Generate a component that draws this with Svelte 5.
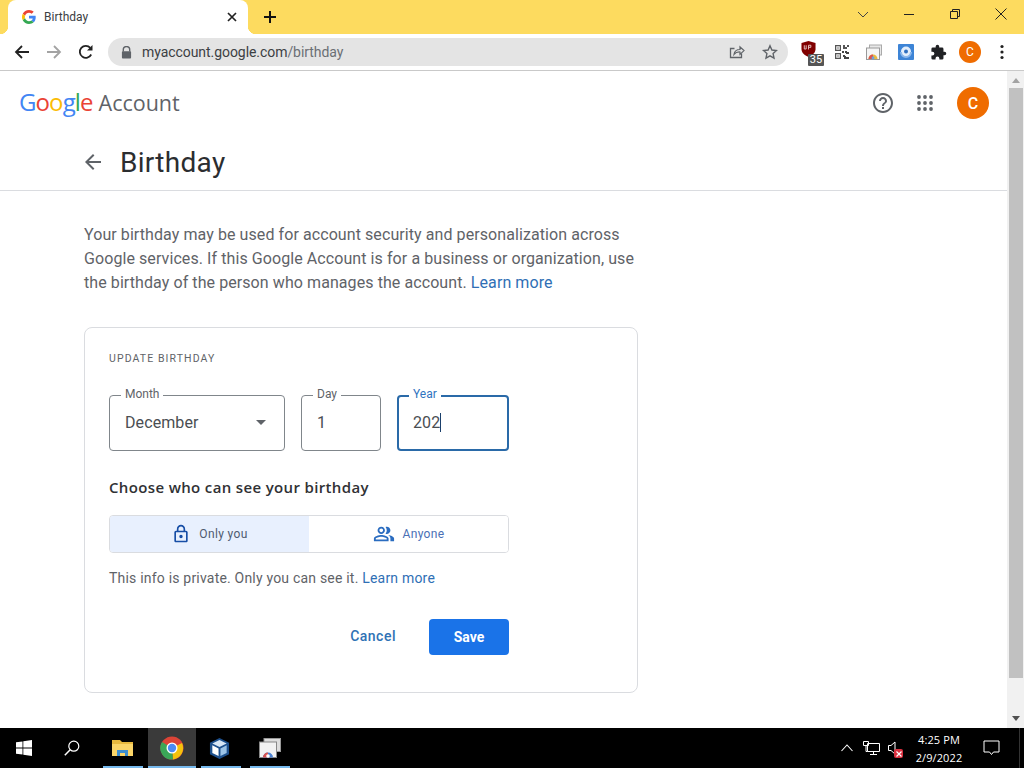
<script>
  const day = "1";
  const year = "202";
  let audience = "me";
</script>

<div class="screen">
  <div class="tabstrip">
    <div class="tab">
      <svg class="favicon" viewBox="0 0 48 48" width="14" height="14">
        <path fill="#EA4335" d="M24 9.500c3.500 0 6.700 1.200 9.200 3.600l6.900-6.900C35.900 2.400 30.500 0 24 0 14.600 0 6.500 5.400 2.600 13.200l8 6.200C12.500 13.600 17.800 9.500 24 9.500z"/>
        <path fill="#4285F4" d="M47 24.500c0-1.600-.2-3.100-.4-4.500H24v9h12.900c-.6 3-2.200 5.500-4.700 7.200l7.700 6C44.400 38 47 31.800 47 24.500z"/>
        <path fill="#FBBC05" d="M10.500 28.600c-.5-1.500-.8-3-.8-4.600s.3-3.100.8-4.600l-8-6.200C.9 16.500 0 20.100 0 24s.9 7.500 2.600 10.800l7.900-6.200z"/>
        <path fill="#34A853" d="M24 48c6.500 0 11.900-2.100 15.900-5.800l-7.700-6c-2.200 1.400-4.900 2.300-8.200 2.300-6.200 0-11.500-4.200-13.400-9.800l-8 6.200C6.500 42.600 14.600 48 24 48z"/>
      </svg>
      <span class="tab-title">Birthday</span>
      <svg class="tab-close" viewBox="0 0 12 12" width="12" height="12"><path d="M2 2l8 8M10 2l-8 8" stroke="#222" stroke-width="1.700" fill="none"/></svg>
    </div>
    <div class="new-tab">
      <svg viewBox="0 0 14 14" width="14" height="14"><path d="M7 1v12M1 7h12" stroke="#111" stroke-width="2" fill="none"/></svg>
    </div>
    <div class="spacer"></div>
    <div class="winbtn"><svg viewBox="0 0 12 12" width="12" height="12"><path d="M1 4l5 5 5-5" stroke="#444" fill="none"/></svg></div>
    <div class="winbtn"><svg viewBox="0 0 12 12" width="12" height="12"><path d="M1 6.500h10" stroke="#222" fill="none"/></svg></div>
    <div class="winbtn"><svg viewBox="0 0 12 12" width="12" height="12"><path d="M1.500 3.500h7v7h-7zM3.500 3.500v-2h7v7h-2" stroke="#222" fill="none"/></svg></div>
    <div class="winbtn"><svg viewBox="0 0 12 12" width="12" height="12"><path d="M.5.500l11 11M11.500.500l-11 11" stroke="#222" fill="none"/></svg></div>
  </div>

  <div class="toolbar">
    <div class="tool"><svg viewBox="0 0 16 16" width="16" height="16"><path d="M15 8H2M8 2L2 8l6 6" stroke="#222" stroke-width="1.800" fill="none"/></svg></div>
    <div class="tool"><svg viewBox="0 0 16 16" width="16" height="16"><path d="M1 8h13M8 2l6 6-6 6" stroke="#a3a3a3" stroke-width="1.800" fill="none"/></svg></div>
    <div class="tool"><svg viewBox="0 0 16 16" width="16" height="16"><path d="M13.200 10.500A6 6 0 1 1 12.300 3.800" stroke="#222" stroke-width="1.800" fill="none"/><path d="M14.500 1v5.500H9z" fill="#222"/></svg></div>
    <div class="omnibox">
      <svg class="lock" viewBox="0 0 12 14" width="11" height="13"><path d="M2.500 6V4a3.500 3.500 0 0 1 7 0v2" stroke="#5f6368" stroke-width="1.500" fill="none"/><rect x="1" y="5.500" width="10" height="8" rx="1" fill="#5f6368"/></svg>
      <span class="url">myaccount.google.com<span class="url-path">/birthday</span></span>
      <span class="spacer"></span>
      <svg class="omni-icon" viewBox="0 0 16 16" width="16" height="16"><path d="M12.500 9.500v4h-11v-9h4" stroke="#5f6368" stroke-width="1.300" fill="none"/><path d="M5 10.500c.4-3 2.600-5 6-5V2.800l4 3.800-4 3.800V8c-2.600-.2-4.600.7-6 2.500z" stroke="#5f6368" stroke-width="1.200" fill="none"/></svg>
      <svg class="omni-icon star" viewBox="0 0 16 16" width="16" height="16"><path d="M8 1.800l1.900 4.200 4.600.5-3.400 3.100.9 4.500L8 11.800l-4 2.300.9-4.500-3.400-3.100 4.600-.5z" stroke="#5f6368" stroke-width="1.400" fill="none"/></svg>
    </div>
    <div class="extensions">
      <div class="tool ublock">
        <svg class="shield" viewBox="0 0 16 17" width="15" height="16"><path d="M8 0l7.500 2.200v6.300c0 4-3.200 6.700-7.500 8.500-4.300-1.800-7.500-4.500-7.500-8.500V2.200z" fill="#800000"/><path d="M3.500 4.500v4h2v-4M8 9V4.500h2.500v2.200H8" stroke="#e8c8c8" stroke-width="1" fill="none"/></svg>
        <span class="badge">35</span>
      </div>
      <div class="tool">
        <svg viewBox="0 0 14 14" width="14" height="14">
          <path fill="#555" d="M0 0h6v6H0zM8 0h2v2h2v2H8zM12 0h2v2h-2zM0 8h6v6H0z"/>
          <path fill="#eee" d="M1.200 1.200h3.600v3.600H1.200zM1.200 9.200h3.600v3.600H1.200z"/>
          <path fill="#444" d="M2.400 2.400h1.200v1.200H2.400zM2.400 10.400h1.200v1.200H2.400zM7 6h2v2H7zM10 6h2v1h2v2h-3v-1h-1zM8 10h2v1h1v1h3v2H9v-2H8z"/>
        </svg>
      </div>
      <div class="tool">
        <svg viewBox="0 0 16 16" width="16" height="16">
          <rect x="3.500" y="1" width="12" height="10" fill="#e8e8e8" stroke="#aaa"/>
          <rect x="0.500" y="4" width="13" height="11.500" fill="#f5f5f5" stroke="#999"/>
          <path d="M2.500 15a4.500 4.500 0 0 1 9 0z" fill="#e8b93e"/>
          <path d="M2.500 15a4.500 4.500 0 0 1 4.500-4.500V15z" fill="#d9534f"/>
          <circle cx="7" cy="14" r="1.400" fill="#6a9fe0"/>
        </svg>
      </div>
      <div class="tool">
        <svg viewBox="0 0 16 16" width="16" height="16"><rect width="16" height="16" rx="1" fill="#3d84d6"/><circle cx="8" cy="7.500" r="5" fill="#e3eefb"/><circle cx="8" cy="7.500" r="2" fill="#2f6fc0"/><path d="M2 8a6 6 0 0 0 12 0l-2 0a4 4 0 0 1-8 0z" fill="#8cb8ec"/></svg>
      </div>
      <div class="tool">
        <svg viewBox="0 0 24 24" width="17" height="17"><path fill="#202124" d="M20.500 11H19V7a2 2 0 0 0-2-2h-4V3.500a2.500 2.500 0 0 0-5 0V5H4a2 2 0 0 0-2 2v3.800h1.500a2.700 2.700 0 0 1 0 5.400H2V20a2 2 0 0 0 2 2h3.800v-1.500a2.700 2.700 0 0 1 5.400 0V22H17a2 2 0 0 0 2-2v-4h1.500a2.500 2.500 0 0 0 0-5z"/></svg>
      </div>
      <div class="tool"><span class="avatar small">C</span></div>
      <div class="tool">
        <svg viewBox="0 0 4 16" width="4" height="16"><circle cx="2" cy="2.500" r="1.600" fill="#222"/><circle cx="2" cy="8" r="1.600" fill="#222"/><circle cx="2" cy="13.500" r="1.600" fill="#222"/></svg>
      </div>
    </div>
  </div>

  <div class="viewport">
    <div class="page">
      <header class="topbar">
        <div class="logo">
          <span class="google"><span class="b">G</span><span class="r">o</span><span class="y">o</span><span class="b">g</span><span class="g">l</span><span class="r">e</span></span>
          <span class="account">Account</span>
        </div>
        <div class="spacer"></div>
        <svg class="help" viewBox="0 0 24 24" width="24" height="24"><path fill="#5f6368" d="M11 18h2v-2h-2v2zm1-16C6.480 2 2 6.480 2 12s4.480 10 10 10 10-4.480 10-10S17.520 2 12 2zm0 18c-4.410 0-8-3.590-8-8s3.590-8 8-8 8 3.590 8 8-3.590 8-8 8zm0-14c-2.210 0-4 1.790-4 4h2c0-1.100.9-2 2-2s2 .9 2 2c0 2-3 1.750-3 5h2c0-2.250 3-2.500 3-5 0-2.210-1.790-4-4-4z"/></svg>
        <svg class="apps" viewBox="0 0 16 16" width="16" height="16">
          {#each [2, 8, 14] as cy}
            {#each [2, 8, 14] as cx}
              <circle {cx} {cy} r="1.900" fill="#5f6368"/>
            {/each}
          {/each}
        </svg>
        <span class="avatar large">C</span>
      </header>

      <div class="title-row">
        <svg viewBox="0 0 24 24" width="24" height="24"><path fill="#5f6368" d="M20 11H7.830l5.590-5.590L12 4l-8 8 8 8 1.410-1.410L7.830 13H20v-2z"/></svg>
        <h1>Birthday</h1>
      </div>

      <main class="content">
        <p class="intro">Your birthday may be used for account security and personalization across Google services. If this Google Account is for a business or organization, use the birthday of the person who manages the account. <span class="link">Learn more</span></p>

        <section class="card">
          <h2>UPDATE BIRTHDAY</h2>
          <div class="fields">
            <div class="field month">
              <span class="legend">Month</span>
              <span class="value">December</span>
              <span class="caret"></span>
            </div>
            <div class="field day">
              <span class="legend">Day</span>
              <span class="value">{day}</span>
            </div>
            <div class="field year">
              <span class="legend">Year</span>
              <span class="value">{year}</span><span class="cursor"></span>
            </div>
          </div>

          <h3>Choose who can see your birthday</h3>

          <div class="toggle">
            <button class:on={audience === "me"} onclick={() => (audience = "me")}>
              <svg viewBox="0 0 24 24" width="20" height="20"><path fill="#174ea6" d="M18 8h-1V6c0-2.760-2.240-5-5-5S7 3.240 7 6v2H6c-1.100 0-2 .9-2 2v10c0 1.100.9 2 2 2h12c1.100 0 2-.9 2-2V10c0-1.100-.9-2-2-2zM9 6c0-1.660 1.340-3 3-3s3 1.340 3 3v2H9V6zm9 14H6V10h12v10zm-6-3c1.100 0 2-.9 2-2s-.9-2-2-2-2 .9-2 2 .9 2 2 2z"/></svg>
              <span>Only you</span>
            </button>
            <button class:on={audience === "all"} onclick={() => (audience = "all")}>
              <svg viewBox="0 0 24 24" width="22" height="22"><path fill="#2a6cc0" d="M16.670 13.130C18.040 14.060 19 15.320 19 17v3h4v-3c0-2.180-3.570-3.470-6.330-3.870zM15 12c2.210 0 4-1.790 4-4s-1.790-4-4-4c-.47 0-.91.100-1.330.24C14.500 5.270 15 6.580 15 8s-.5 2.730-1.330 3.760c.42.140.86.240 1.330.240zM9 12c2.210 0 4-1.790 4-4s-1.790-4-4-4-4 1.790-4 4 1.790 4 4 4zm0-6c1.100 0 2 .9 2 2s-.9 2-2 2-2-.9-2-2 .9-2 2-2zm0 7c-2.670 0-8 1.340-8 4v3h16v-3c0-2.660-5.330-4-8-4zm6 5H3v-.99C3.200 16.290 6.300 15 9 15s5.800 1.290 6 2v1z"/></svg>
              <span>Anyone</span>
            </button>
          </div>

          <p class="note">This info is private. Only you can see it. <span class="link">Learn more</span></p>

          <div class="actions">
            <span class="cancel">Cancel</span>
            <span class="save">Save</span>
          </div>
        </section>
      </main>
    </div>

    <div class="scrollbar">
      <span class="arrow up"></span>
      <div class="thumb"></div>
      <span class="arrow down"></span>
    </div>
  </div>

  <footer class="taskbar">
    <div class="task start">
      <svg viewBox="0 0 16 16" width="16" height="16"><path fill="#fff" d="M0 2.300l6.500-.9v6.200H0zM7.300 1.300L16 0v7.600H7.300zM0 8.400h6.500v6.200L0 13.700zM7.300 8.400H16V16l-8.700-1.200z"/></svg>
    </div>
    <div class="task search">
      <svg viewBox="0 0 16 16" width="16" height="16"><circle cx="9.800" cy="6.200" r="5" stroke="#fff" stroke-width="1.200" fill="none"/><path d="M6.200 9.800L.8 15.200" stroke="#fff" stroke-width="1.500"/></svg>
    </div>
    <div class="task app explorer">
      <svg viewBox="0 0 22 18" width="22" height="18"><path d="M0 1h8l2 2h11v14H0z" fill="#e8b93e"/><path d="M0 5h21v12H0z" fill="#fbd568"/><path d="M5 17v-6h11v6h-3v-3H8v3z" fill="#3d8ed0"/></svg>
    </div>
    <div class="task app active">
      <svg viewBox="0 0 24 24" width="24" height="24">
        <circle cx="12" cy="12" r="11.500" fill="#db4437"/>
        <path d="M12 12L22 7a11.500 11.500 0 0 1-9 16.500z" fill="#f4c20d"/>
        <path d="M12 12L13 23.500A11.500 11.500 0 0 1 2 6z" fill="#3aa757"/>
        <circle cx="12" cy="12" r="5.500" fill="#fff"/>
        <circle cx="12" cy="12" r="4.200" fill="#4b8bf5"/>
      </svg>
    </div>
    <div class="task app vbox">
      <svg viewBox="0 0 22 24" width="21" height="23"><path d="M11 1l10 5v12l-10 5L1 18V6z" fill="#1c4f8c"/><path d="M11 3l7.500 3.700L11 10.500 3.500 6.700z" fill="#d7e6f5"/><path d="M3.500 8.500l6.500 3.400v8l-6.500-3.300z" fill="#fff"/><path d="M12 11.900l6.500-3.400v8.100L12 19.900z" fill="#9cc3e6"/></svg>
    </div>
    <div class="task app">
      <svg viewBox="0 0 22 20" width="22" height="20"><rect x="5" y="0.500" width="16.500" height="13" fill="#ddd" stroke="#999"/><rect x="0.500" y="4" width="17" height="15.500" fill="#f2f2f2" stroke="#888"/><path d="M4 19.500a5 5 0 0 1 10 0z" fill="#4a80d0"/><path d="M4 19.500a5 5 0 0 1 5-5v5z" fill="#d9534f"/><circle cx="9" cy="18" r="1.800" fill="#fff"/></svg>
    </div>
    <div class="spacer"></div>
    <div class="tray">
      <svg viewBox="0 0 12 8" width="12" height="8"><path d="M.5 7l5.500-6 5.500 6" stroke="#fff" stroke-width="1.100" fill="none"/></svg>
      <svg class="net" viewBox="0 0 17 15" width="17" height="15"><path d="M4.500 2.500h12v8h-12zM10.500 10.500v3M7 13.500h7M.5.500h5v4h-5zM3 4.500v6h1.500" stroke="#fff" fill="#000"/></svg>
      <span class="speaker">
        <svg viewBox="0 0 10 14" width="10" height="14"><path d="M.5 4.500h2.500l4-3.500v12l-4-3.500H.5z" stroke="#fff" fill="none"/></svg>
        <span class="mute">
          <svg viewBox="0 0 8 8" width="8" height="8"><path d="M1.500 1.500l5 5M6.500 1.500l-5 5" stroke="#fff" stroke-width="1.200"/></svg>
        </span>
      </span>
    </div>
    <div class="clock">
      <span>4:25 PM</span>
      <span>2/9/2022</span>
    </div>
    <div class="notify">
      <svg viewBox="0 0 16 16" width="17" height="16"><path d="M.5 1h15v11H10l-2 2.500L6 12H.5z" stroke="#fff" fill="none"/></svg>
    </div>
    <div class="show-desktop"></div>
  </footer>
</div>

<style>
  :global(body) {
    margin: 0;
    overflow: hidden;
    background: #fff;
  }

  .screen {
    width: 1024px;
    height: 768px;
    display: flex;
    flex-direction: column;
    font-family: Roboto, "Liberation Sans", sans-serif;
    color: #5f6368;
    overflow: hidden;
  }

  .spacer {
    flex: 1;
  }

  /* browser chrome */
  .tabstrip {
    height: 34px;
    display: flex;
    background: #fddb5f;
    flex: none;
  }

  .tab {
    position: relative;
    width: 240px;
    margin-left: 8px;
    background: #fff;
    border-radius: 8px 8px 0 0;
    display: flex;
    align-items: center;
    box-sizing: border-box;
    padding: 0 10px 0 14px;
  }

  .tab::before,
  .tab::after {
    content: "";
    position: absolute;
    bottom: 0;
    width: 8px;
    height: 8px;
  }

  .tab::before {
    left: -8px;
    background: radial-gradient(circle at 0 0, #fddb5f 8px, #fff 8.500px);
  }

  .tab::after {
    right: -8px;
    background: radial-gradient(circle at 100% 0, #fddb5f 8px, #fff 8.500px);
  }

  .tab-title {
    flex: 1;
    margin-left: 8px;
    font-size: 12px;
    color: #3c4043;
  }

  .new-tab {
    width: 28px;
    margin-left: 8px;
    display: flex;
    align-items: center;
    justify-content: center;
  }

  .winbtn {
    width: 46px;
    display: flex;
    align-items: center;
    justify-content: center;
    padding-bottom: 6px;
    box-sizing: border-box;
  }

  .toolbar {
    height: 37px;
    flex: none;
    box-sizing: border-box;
    border-bottom: 1px solid #c9c9c9;
    display: flex;
    align-items: center;
    padding-left: 6px;
    background: #fff;
  }

  .tool {
    width: 32px;
    height: 28px;
    display: flex;
    align-items: center;
    justify-content: center;
    position: relative;
    flex: none;
  }

  .omnibox {
    width: 680px;
    height: 28px;
    margin-left: 6px;
    border-radius: 14px;
    background: #e4e4e4;
    display: flex;
    align-items: center;
    box-sizing: border-box;
    padding: 0 10px 0 13px;
    flex: none;
  }

  .url {
    margin-left: 10px;
    font-size: 14px;
    letter-spacing: -0.060px;
    color: #3c4043;
  }

  .url-path {
    color: #6b6f74;
  }

  .omni-icon.star {
    margin-left: 17px;
  }

  .extensions {
    display: flex;
    margin-left: 6px;
  }

  .ublock .shield {
    margin: -6px 3px 0 0;
  }

  .badge {
    position: absolute;
    right: 2px;
    bottom: 0;
    width: 16px;
    height: 12px;
    background: #555;
    color: #fff;
    font-size: 11px;
    line-height: 12px;
    text-align: center;
    border-radius: 1px;
  }

  .avatar {
    background: #ef6c00;
    color: #fff;
    border-radius: 50%;
    display: flex;
    align-items: center;
    justify-content: center;
  }

  .avatar.small {
    width: 22px;
    height: 22px;
    font-size: 12px;
  }

  .avatar.large {
    width: 32px;
    height: 32px;
    font-size: 16px;
    font-weight: 500;
    margin-left: 24px;
  }

  /* page */
  .viewport {
    flex: 1;
    display: flex;
    min-height: 0;
  }

  .page {
    flex: 1;
    min-width: 0;
  }

  .topbar {
    height: 64px;
    display: flex;
    align-items: center;
    padding: 0 18px 0 19px;
  }

  .logo {
    display: flex;
    align-items: baseline;
    font-family: "Open Sans", sans-serif;
    margin-top: -3px;
  }

  .google {
    font-size: 24px;
    letter-spacing: -0.900px;
  }

  .account {
    margin-left: 6px;
    font-size: 21.500px;
    color: #5f6368;
  }

  .b { color: #4285f4; }
  .r { color: #ea4335; }
  .y { color: #fbbc05; }
  .g { color: #34a853; }

  .apps {
    margin-left: 22px;
  }

  .title-row {
    height: 56px;
    box-sizing: border-box;
    padding: 0 0 1px 81px;
    display: flex;
    align-items: center;
    border-bottom: 1px solid #dadce0;
  }

  h1 {
    margin: 0 0 0 15px;
    font-size: 28px;
    font-weight: 400;
    letter-spacing: 0.300px;
    color: #2b2d30;
  }

  .content {
    padding: 32px 0 0 84px;
    width: 554px;
  }

  .intro {
    margin: 0;
    font-size: 16px;
    line-height: 24px;
    letter-spacing: 0.080px;
    color: #5f6368;
  }

  .link {
    color: #2f6fb5;
  }

  .card {
    margin-top: 32px;
    height: 366px;
    box-sizing: border-box;
    border: 1px solid #dadce0;
    border-radius: 8px;
    padding: 24px;
  }

  h2 {
    margin: 0;
    font-size: 10.500px;
    line-height: 14px;
    font-weight: 400;
    letter-spacing: 1.100px;
    color: #5f6368;
  }

  .fields {
    display: flex;
    gap: 16px;
    margin-top: 29px;
  }

  .field {
    position: relative;
    height: 56px;
    box-sizing: border-box;
    border: 1px solid #80868b;
    border-radius: 4px;
    padding: 0 15px 1px;
    display: flex;
    align-items: center;
    font-size: 16px;
    letter-spacing: 0.100px;
    color: #4a4e52;
  }

  .month { width: 176px; }
  .day { width: 80px; }

  .year {
    width: 112px;
    border: 2px solid #2a6aa8;
    padding: 0 14px 1px;
  }

  .legend {
    position: absolute;
    top: -9px;
    left: 11px;
    padding: 0 4px;
    background: #fff;
    font-size: 12px;
    line-height: 14px;
    letter-spacing: 0;
    color: #5f6368;
  }

  .year .legend {
    color: #2f74c0;
    left: 10px;
    top: -10px;
  }

  .caret {
    margin-left: auto;
    margin-right: 3px;
    border: 5px solid transparent;
    border-top-color: #5f6368;
    border-bottom: 0;
  }

  .cursor {
    width: 1px;
    height: 19px;
    background: #1a3f6b;
  }

  h3 {
    margin: 26px 0 0;
    font-family: "Open Sans", sans-serif;
    font-size: 15px;
    line-height: 20px;
    font-weight: 600;
    letter-spacing: 0.350px;
    color: #303134;
  }

  .toggle {
    display: flex;
    width: 400px;
    height: 38px;
    margin-top: 18px;
    box-sizing: border-box;
    border: 1px solid #dadce0;
    border-radius: 4px;
    overflow: hidden;
  }

  .toggle button {
    flex: 1 1 0;
    display: flex;
    align-items: center;
    justify-content: center;
    gap: 8px;
    border: 0;
    background: #fff;
    padding: 0;
    font-family: inherit;
    font-size: 12px;
    letter-spacing: 0.350px;
    color: #4a6fb5;
  }

  .toggle button.on {
    background: #e8f0fe;
    color: #4f5b70;
    border-right: 1px solid #c6cdd8;
    margin-right: -1px;
  }

  .note {
    margin: 15px 0 0;
    font-size: 14px;
    line-height: 20px;
    letter-spacing: 0.200px;
    color: #5f6368;
  }

  .actions {
    display: flex;
    justify-content: flex-end;
    align-items: center;
    width: 400px;
    margin-top: 31px;
    gap: 33px;
  }

  .cancel {
    font-size: 14px;
    font-weight: 500;
    letter-spacing: 0.500px;
    padding-bottom: 2px;
    color: #2f72b5;
  }

  .save {
    width: 80px;
    height: 36px;
    box-sizing: border-box;
    padding-bottom: 1px;
    background: #1a73e8;
    color: #fff;
    border-radius: 4px;
    font-size: 14px;
    font-weight: 700;
    display: flex;
    align-items: center;
    justify-content: center;
  }

  /* scrollbar */
  .scrollbar {
    width: 17px;
    flex: none;
    background: #f1f1f1;
    display: flex;
    flex-direction: column;
    align-items: center;
  }

  .thumb {
    flex: none;
    width: 14px;
    height: 590px;
    background: #c1c1c1;
  }

  .arrow {
    flex: none;
    border: 4px solid transparent;
  }

  .arrow.up {
    border-bottom: 5px solid #a3a3a3;
    border-top: 0;
    margin: 7px 0 5px;
  }

  .arrow.down {
    border-top: 5px solid #505050;
    border-bottom: 0;
    margin-top: 38px;
  }

  /* windows taskbar */
  .taskbar {
    height: 40px;
    flex: none;
    background: #000;
    display: flex;
    color: #fff;
  }

  .task {
    display: flex;
    align-items: center;
    justify-content: center;
    box-sizing: border-box;
    flex: none;
  }

  .start { width: 48px; }
  .search { width: 48px; }

  .app {
    width: 48px;
    height: 40px;
    position: relative;
    margin-left: 1px;
  }

  .app::after {
    content: "";
    position: absolute;
    left: 4px;
    right: 4px;
    bottom: 0;
    height: 2px;
    background: #76b9ed;
  }

  .explorer { margin-left: 3px; }

  .active {
    background: #3a3a3a;
  }

  .active::after {
    left: 0;
    right: 0;
  }

  .vbox { padding-right: 4px; }

  .tray {
    display: flex;
    align-items: center;
    gap: 10px;
  }

  .speaker {
    position: relative;
    display: flex;
    margin: 0 6px 0 -2px;
  }

  .mute {
    position: absolute;
    left: 6px;
    bottom: -3px;
    width: 9px;
    height: 9px;
    background: #d9303f;
    border-radius: 2px;
    display: flex;
    align-items: center;
    justify-content: center;
  }

  .clock {
    width: 68px;
    box-sizing: border-box;
    padding-left: 2px;
    display: flex;
    flex-direction: column;
    align-items: center;
    justify-content: center;
    gap: 3px;
    font-family: "Open Sans", sans-serif;
    font-size: 11px;
    line-height: 15px;
    letter-spacing: 0.100px;
  }

  .notify {
    width: 38px;
    display: flex;
    align-items: center;
    justify-content: center;
  }

  .show-desktop {
    width: 14px;
    box-sizing: border-box;
    border-right: 4px solid #000;
    background: linear-gradient(#000, #000) left / 9px 100% no-repeat, #333;
  }
</style>
